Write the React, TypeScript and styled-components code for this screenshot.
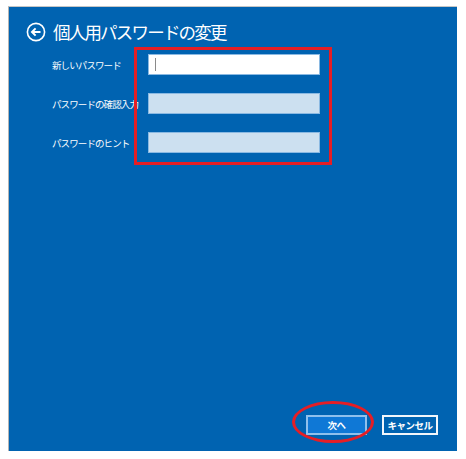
import React from "react";
import styled, { createGlobalStyle } from "styled-components";

const Global = createGlobalStyle`
  html, body { margin: 0; padding: 0; background: #ffffff; }
  body { padding: 6px 0 0 8px; font-family: "Noto Sans CJK JP", "Noto Sans", sans-serif; }
`;

const Panel = styled.div`
  box-sizing: border-box;
  width: 449px;
  height: 445px;
  background: #0063b1;
  border-top: 1px solid #c6c6c6;
  border-left: 1px solid #b4b4b4;
  display: flex;
  flex-direction: column;
  color: #ffffff;
`;

const Header = styled.div`
  display: flex;
  align-items: center;
  gap: 7px;
  padding: 13px 0 0 17px;
  height: 24px;
`;

const Title = styled.h1`
  margin: 0;
  font-size: 17.5px;
  font-weight: 400;
  letter-spacing: -1.8px;
  line-height: 24px;
  white-space: nowrap;
`;

const Form = styled.div`
  display: flex;
  align-items: flex-start;
  margin-top: 3px;
  padding-left: 43px;
`;

const LabelColumn = styled.div`
  width: 82px;
  display: flex;
  flex-direction: column;
  gap: 18px;
  padding-top: 7px;
`;

const Label = styled.div`
  height: 21px;
  line-height: 22px;
  font-size: 9.5px;
  letter-spacing: -0.9px;
  white-space: nowrap;
`;

const FieldBox = styled.div`
  width: 198px;
  box-sizing: border-box;
  border: 3px solid #e61e25;
  padding: 4px 9px 9px 11px;
  display: flex;
  flex-direction: column;
  gap: 18px;
`;

const Field = styled.div<{ $active?: boolean }>`
  box-sizing: border-box;
  height: 21px;
  width: 172px;
  border: 1px solid #8ab9e2;
  background: ${(p) => (p.$active ? "#ffffff" : "#cce0f0")};
  display: flex;
  align-items: center;
  padding-left: 6px;
`;

const Caret = styled.span`
  display: block;
  width: 1px;
  height: 13px;
  background: #8a8a8a;
`;

const Spacer = styled.div`
  flex: 1;
`;

const Footer = styled.div`
  display: flex;
  justify-content: flex-end;
  gap: 15px;
  padding: 0 19px 16px 0;
`;

const Button = styled.button<{ $primary?: boolean }>`
  box-sizing: border-box;
  height: 20px;
  width: ${(p) => (p.$primary ? "61px" : "56px")};
  border: 2px solid ${(p) => (p.$primary ? "#8fc0ec" : "#f2f6fb")};
  background: ${(p) => (p.$primary ? "#0f78d6" : "#0063b1")};
  color: #ffffff;
  font-family: "Noto Sans CJK JP", "Noto Sans", sans-serif;
  font-size: 9.5px;
  font-weight: 700;
  letter-spacing: -0.5px;
  padding: 0;
  line-height: 16px;
`;

const Highlight = styled.div`
  position: relative;
  display: flex;
`;

const Ellipse = styled.div`
  position: absolute;
  left: -14px;
  top: -14px;
  width: 82px;
  height: 42px;
  box-sizing: border-box;
  border: 3px solid #e61e25;
  border-radius: 50%;
  pointer-events: none;
`;

const BackIcon = () => (
  <svg width="20" height="20" viewBox="0 0 20 20" fill="none">
    <circle cx="10" cy="10" r="8.6" stroke="#fff" strokeWidth="1.6" />
    <path d="M14.5 10H6.2" stroke="#fff" strokeWidth="2" />
    <path d="M9.6 6.4L6 10l3.6 3.6" stroke="#fff" strokeWidth="2" />
  </svg>
);

export default function App() {
  return (
    <>
      <Global />
      <Panel>
        <Header>
          <BackIcon />
          <Title>個人用パスワードの変更</Title>
        </Header>
        <Form>
          <LabelColumn>
            <Label>新しいパスワード</Label>
            <Label>パスワードの確認入力</Label>
            <Label>パスワードのヒント</Label>
          </LabelColumn>
          <FieldBox>
            <Field $active>
              <Caret />
            </Field>
            <Field />
            <Field />
          </FieldBox>
        </Form>
        <Spacer />
        <Footer>
          <Highlight>
            <Button $primary>次へ</Button>
            <Ellipse />
          </Highlight>
          <Button>キャンセル</Button>
        </Footer>
      </Panel>
    </>
  );
}
